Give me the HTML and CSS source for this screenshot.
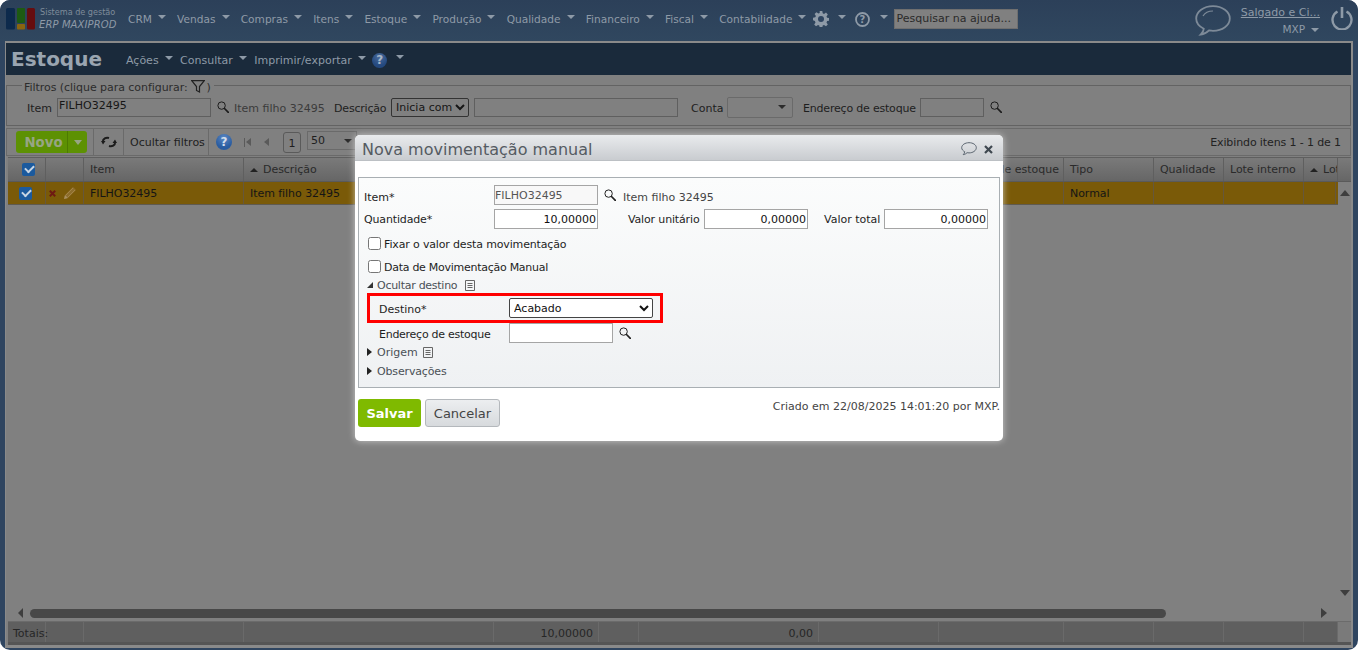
FILE: index.html
```html
<!DOCTYPE html>
<html lang="pt-BR">
<head>
<meta charset="utf-8">
<title>Estoque - ERP MAXIPROD</title>
<link rel="stylesheet" href="styles.css">
</head>
<body>
<svg class="defs" width="0" height="0" aria-hidden="true">
  <symbol id="mag" viewBox="0 0 12 12"><circle cx="4.600" cy="4.600" r="3.700" fill="none" stroke="currentColor" stroke-width="1"/><path d="M7.500 7.500l3.800 3.800" stroke="currentColor" stroke-width="1.700" stroke-linecap="round"/></symbol>
  <symbol id="doc" viewBox="0 0 10 11"><path d="M.5.5h9v10h-9zM2.500 3.500h5M2.500 5.500h5M2.500 7.500h5" fill="none" stroke="currentColor"/></symbol>
</svg>
<div class="app">
  <header class="topbar">
    <div class="logo">
      <svg width="30" height="22" viewBox="0 0 30 22"><rect x="0" y="0" width="9" height="21.500" rx="1.500" fill="#0d2a4c"/><rect x="11" y="0" width="8" height="15" rx="1" fill="#1d5a12"/><rect x="11" y="16" width="8" height="5.500" rx="1" fill="#8a6510"/><rect x="21" y="0" width="8" height="21.500" rx="1.500" fill="#660d0f"/></svg>
      <div class="logo-text"><span class="logo-a">Sistema de gestão</span><span class="logo-b">ERP MAXIPROD</span></div>
    </div>
    <nav class="mainnav">
      <a class="nav-item">CRM<i class="caret"></i></a>
      <a class="nav-item">Vendas<i class="caret"></i></a>
      <a class="nav-item">Compras<i class="caret"></i></a>
      <a class="nav-item">Itens<i class="caret"></i></a>
      <a class="nav-item">Estoque<i class="caret"></i></a>
      <a class="nav-item">Produção<i class="caret"></i></a>
      <a class="nav-item">Qualidade<i class="caret"></i></a>
      <a class="nav-item">Financeiro<i class="caret"></i></a>
      <a class="nav-item">Fiscal<i class="caret"></i></a>
      <a class="nav-item nav-last">Contabilidade<i class="caret"></i></a>
      <svg class="gear" width="16" height="16" viewBox="0 0 16 16"><path d="M6.700 0h2.600l.4 2.300 1.300.6 2-1.300 1.800 1.800-1.300 2 .6 1.300 2.300.4v2.600l-2.300.4-.6 1.300 1.300 2-1.800 1.800-2-1.300-1.300.6-.4 2.300H6.700l-.4-2.300-1.300-.6-2 1.300-1.800-1.800 1.300-2-.6-1.300L0 9.300V6.700l2.300-.4.6-1.300-1.300-2 1.800-1.800 2 1.300 1.300-.6z" fill="#8e9aa7"/><circle cx="8" cy="8" r="3" fill="#2f4560"/></svg>
      <i class="caret caret-gear"></i>
      <svg class="qmark" width="15" height="15" viewBox="0 0 15 15"><circle cx="7.500" cy="7.500" r="6.500" fill="none" stroke="#8e9aa7" stroke-width="1.800"/><text x="7.500" y="11" text-anchor="middle" class="qmark-t">?</text></svg>
      <i class="caret caret-q"></i>
      <input class="help-search" placeholder="Pesquisar na ajuda...">
    </nav>
    <svg class="bubble" width="36" height="31" viewBox="0 0 36 31"><path d="M18 1.200C8.600 1.200 1.200 6.800 1.200 13.500c0 4.400 3 8 7.600 10.200-.2 2.200-1.500 4.400-3 5.800 3.300-.3 6.400-2.200 8.200-4.100 1.300.2 2.600.4 4 .4 9.400 0 16.800-5.600 16.800-12.300S27.400 1.200 18 1.200z" fill="none" stroke="#7d8a98" stroke-width="1.800"/><path d="M8 11c2-3.500 6-5 10-5" fill="none" stroke="#7d8a98" stroke-width="1.200"/></svg>
    <div class="user">
      <a class="user-name">Salgado e Ci...</a>
      <span class="user-code">MXP<i class="caret caret-user"></i></span>
    </div>
    <svg class="power" width="22" height="23" viewBox="0 0 22 23"><path d="M6.500 4.500a9.500 9.500 0 1 0 9 0" fill="none" stroke="#8e9aa7" stroke-width="2.400"/><path d="M11 0v11" stroke="#8e9aa7" stroke-width="2.600"/></svg>
  </header>

  <main class="panel">
    <div class="titlebar">
      <h1 class="page-title">Estoque</h1>
      <a class="title-item">Ações<i class="caret"></i></a>
      <a class="title-item">Consultar<i class="caret"></i></a>
      <a class="title-item">Imprimir/exportar<i class="caret"></i></a>
      <span class="help-btn help-dim">?</span>
      <i class="caret caret-title"></i>
    </div>

    <fieldset class="filters">
      <legend class="filters-legend">Filtros (clique para configurar:
        <svg class="funnel" width="14" height="13" viewBox="0 0 14 13"><path d="M.7.7h12.600L8.500 6.500v5.500l-3-1.500V6.500z" fill="none" stroke="#222" stroke-width="1.200"/></svg> )</legend>
      <div class="filter-row">
        <label class="f-item">Item</label>
        <input class="fld fld-item" value="FILHO32495">
        <svg class="mag" width="12" height="12"><use href="#mag"/></svg>
        <span class="muted f-name">Item filho 32495</span>
        <label class="f-desc">Descrição</label>
        <select class="sel sel-desc"><option>Inicia com</option></select>
        <input class="fld fld-desc">
        <label class="f-conta">Conta</label>
        <span class="combo"><i class="caret caret-dark"></i></span>
        <label class="f-end">Endereço de estoque</label>
        <input class="fld fld-end">
        <svg class="mag" width="12" height="12"><use href="#mag"/></svg>
      </div>
    </fieldset>

    <div class="toolbar">
      <div class="btn-novo"><span class="novo-l">Novo</span><span class="novo-r"><i class="caret caret-novo"></i></span></div>
      <span class="tool tool-refresh">
        <svg width="16" height="14" viewBox="0 0 16 14"><path d="M1.800 7C1.800 3.500 5 2 8 3M14.200 7c0 3.500-3.200 5-6.200 4" fill="none" stroke="#1c1c1c" stroke-width="2"/><path d="M0 6l2 3.500L4.500 6zM16 8l-2-3.500L11.500 8z" fill="#1c1c1c"/></svg>
      </span>
      <span class="tool tool-text">Ocultar filtros</span>
      <span class="help-btn tool-help">?</span>
      <span class="pg-first"><i class="pg-bar"></i><i class="tri-left"></i></span>
      <i class="tri-left pg-prev"></i>
      <span class="pg-num">1</span>
      <span class="pg-size">50<i class="caret caret-dark"></i></span>
      <span class="pg-info">Exibindo itens 1 - 1 de 1</span>
    </div>

    <div class="grid-head cols">
      <div class="cell"><span class="chk"></span></div>
      <div class="cell"></div>
      <div class="cell cell-t">Item</div>
      <div class="cell cell-t"><i class="tri-up"></i>Descrição</div>
      <div class="cell"></div><div class="cell"></div><div class="cell"></div><div class="cell"></div>
      <div class="cell cell-r">Endereço de estoque</div>
      <div class="cell cell-t">Tipo</div>
      <div class="cell cell-t">Qualidade</div>
      <div class="cell cell-t">Lote interno</div>
      <div class="cell cell-t cell-clip"><i class="tri-up"></i>Lote</div>
      <div class="cell cell-end"></div>
    </div>

    <div class="grid-body">
      <div class="grid-main">
        <div class="grid-row cols">
          <div class="cell"><span class="chk chk-row"></span></div>
          <div class="cell cell-act">
            <svg width="7" height="7" viewBox="0 0 7 7"><path d="M.8.8l5.400 5.400M6.200.8L.8 6.200" stroke="#6e1a12" stroke-width="2"/></svg>
            <svg width="14" height="14" viewBox="0 0 14 14"><path d="M1 13l1-4 8-8 3 3-8 8z" fill="#8d6d2c"/><path d="M3 9l7-7M5 11l7-7" stroke="#a88a4c" stroke-width=".8"/><path d="M1 13l1-4 3 3z" fill="#a98f5f"/></svg>
          </div>
          <div class="cell cell-t">FILHO32495</div>
          <div class="cell cell-t">Item filho 32495</div>
          <div class="cell"></div><div class="cell"></div><div class="cell"></div><div class="cell"></div><div class="cell"></div>
          <div class="cell cell-t">Normal</div>
          <div class="cell"></div><div class="cell"></div><div class="cell"></div>
        </div>
      </div>
      <div class="vscroll"><i class="tri-up tri-big"></i><i class="tri-down tri-big"></i></div>
    </div>

    <div class="hscroll">
      <i class="tri-left hs-left"></i>
      <div class="hs-track"><div class="hs-thumb"></div></div>
      <i class="tri-right hs-right"></i>
    </div>

    <div class="totals cols">
      <div class="cell cell-total">Totais:</div>
      <div class="cell"></div><div class="cell"></div><div class="cell"></div>
      <div class="cell cell-num">10,00000</div>
      <div class="cell"></div>
      <div class="cell cell-num">0,00</div>
      <div class="cell"></div><div class="cell"></div><div class="cell"></div><div class="cell"></div><div class="cell"></div><div class="cell"></div>
      <div class="cell cell-corner"></div>
    </div>
  </main>

  <section class="dialog">
    <div class="dlg-title">
      <h2 class="dlg-h">Nova movimentação manual</h2>
      <svg width="16" height="14" viewBox="0 0 16 14"><path d="M8 .7C4 .7.7 2.900.7 5.700c0 1.700 1.200 3.100 3 4-.1 1.200-.8 2.300-1.500 3 1.600-.2 3-1.100 3.900-2 .6.100 1.200.2 1.900.2 4 0 7.300-2.300 7.300-5.200S12 .7 8 .7z" fill="none" stroke="#5c6670"/></svg>
      <svg class="dlg-x" width="9" height="9" viewBox="0 0 9 9"><path d="M1 1l7 7M8 1L1 8" stroke="#3f4850" stroke-width="2.200"/></svg>
    </div>
    <div class="dlg-form">
      <div class="row row-item">
        <label class="lbl lbl-low3">Item*</label>
        <input class="fld2 fld-w ro" value="FILHO32495">
        <svg class="mag2" width="12" height="12"><use href="#mag"/></svg>
        <span class="item-name">Item filho 32495</span>
      </div>
      <div class="row row-qty">
        <label class="lbl lbl-low1 tight">Quantidade*</label>
        <input class="fld2 fld-w num" value="10,00000">
        <label class="lbl-u lbl-low1 tight">Valor unitário</label>
        <input class="fld2 fld-w num" value="0,00000">
        <label class="lbl-t lbl-low1">Valor total</label>
        <input class="fld2 fld-w num" value="0,00000">
      </div>
      <label class="row row-chk row-chk1"><input class="cb" type="checkbox"><span class="chk-text tight">Fixar o valor desta movimentação</span></label>
      <label class="row row-chk row-chk2"><input class="cb" type="checkbox"><span class="chk-text2 tighter">Data de Movimentação Manual</span></label>
      <div class="row row-sec row-sec1"><i class="tri-corner"></i><span class="sec tighter">Ocultar destino</span><svg class="doc" width="10" height="11"><use href="#doc"/></svg></div>
      <div class="dest">
        <label class="lbl-d lbl-dest">Destino*</label>
        <select class="sel sel-dest"><option>Acabado</option></select>
      </div>
      <div class="row row-end">
        <label class="lbl-d lbl-e lbl-low3 tighter">Endereço de estoque</label>
        <input class="fld2 fld-w">
        <svg class="mag2" width="12" height="12"><use href="#mag"/></svg>
      </div>
      <div class="row row-sec row-sec2"><i class="tri-right tri-black"></i><span class="sec">Origem</span><svg class="doc doc-near" width="10" height="11"><use href="#doc"/></svg></div>
      <div class="row row-sec row-sec3"><i class="tri-right tri-black"></i><span class="sec tight">Observações</span></div>
    </div>
    <div class="dlg-foot">
      <button class="btn-save">Salvar</button>
      <button class="btn-cancel">Cancelar</button>
      <span class="created">Criado em 22/08/2025 14:01:20 por MXP.</span>
    </div>
  </section>
</div>
</body>
</html>
```
FILE: styles.css
```css
* { box-sizing: border-box; }
html, body { margin: 0; height: 650px; overflow: hidden; background: #fff; }
body { font: 11px/1.2 "DejaVu Sans", sans-serif; color: #1e1e1e; }
i { display: block; font-style: normal; }
label, a { display: block; }
.defs { position: absolute; }
.tight { letter-spacing: -.15px; }
.tighter { letter-spacing: -.27px; }
.qmark-t { font: bold 10px "DejaVu Sans", sans-serif; fill: #8e9aa7; }

.app { position: relative; width: 1358px; height: 650px; background: #2f4560; border-radius: 10px; overflow: hidden; display: flex; flex-direction: column; }

.caret { width: 0; height: 0; border-left: 4px solid transparent; border-right: 4px solid transparent; border-top: 4px solid #8e9aa7; margin-left: 6px; }

.help-btn { width: 16px; height: 16px; flex: none; border-radius: 50%; background: radial-gradient(circle at 50% 25%, #5b88c4, #2a5ca0 65%); color: #d5deea; font: bold 12px/16px "DejaVu Sans", sans-serif; text-align: center; }
.help-dim { margin: 2px 0 0 -1px; width: 15px; height: 15px; line-height: 15px; background: radial-gradient(circle at 50% 25%, #4a6c9c, #24497f 65%); color: #a9b6c6; }

.topbar { height: 41px; flex: none; display: flex; align-items: flex-start; background: linear-gradient(#2c4059, #30475f); color: #8e9aa7; }
.logo { width: 128px; padding: 8px 0 0 6px; display: flex; gap: 3px; flex: none; }
.logo-text { display: flex; flex-direction: column; margin-top: -1px; }
.logo-a { font-size: 8.100px; line-height: 11px; color: #7f8c9a; padding-left: 1px; }
.logo-b { font-size: 10px; line-height: 13px; font-style: italic; color: #8e9aa7; letter-spacing: .1px; }
.mainnav { display: flex; align-items: center; height: 29px; margin-top: 4px; width: 890px; flex: none; }
.nav-item { display: flex; align-items: center; font-size: 10.600px; margin-right: 11.200px; padding-top: 2px; white-space: nowrap; }
.nav-item .caret { margin-top: -4px; }
.nav-last { margin-right: 7px; }
.gear { flex: none; margin-top: 1px; }
.caret-gear { margin-left: 9px; margin-top: -4px; }
.qmark { margin-left: 9px; flex: none; margin-top: 1px; }
.caret-q { margin-left: 10px; margin-top: -4px; }
.help-search { width: 124px; height: 20px; margin-left: 6px; padding: 0 1px; border: 1px solid #6f6f6f; background: #808080; font: 11px "DejaVu Sans", sans-serif; color: #222; }
.help-search::placeholder { color: #2a2a2a; opacity: 1; }
.bubble { margin: 5px 0 0 177px; flex: none; }
.user { width: 78px; margin: 6px 0 0 11px; flex: none; display: flex; flex-direction: column; align-items: flex-end; }
.user-name { font-size: 11px; text-decoration: underline; color: #8e9aa7; white-space: nowrap; line-height: 14px; }
.user-code { display: flex; align-items: center; margin-top: 3px; font-size: 10.500px; line-height: 13px; color: #8e9aa7; padding-right: 1px; }
.caret-user { margin-left: 6px; }
.power { margin: 7px 0 0 11px; flex: none; }

.panel { flex: none; width: 1348px; height: 607px; margin-left: 5px; background: #808080; border: 2px solid #8a8a8a; border-bottom-width: 3px; border-left-width: 1px; border-right-width: 2px; display: flex; flex-direction: column; }
.titlebar { height: 32px; flex: none; background: #1a2a3b; display: flex; align-items: center; padding-left: 5px; color: #8e9aa7; }
.page-title { margin: 0 24px 0 0; font-size: 20px; font-weight: bold; color: #9aa5b0; line-height: 32px; }
.title-item { display: flex; align-items: center; margin-right: 7.500px; white-space: nowrap; padding-top: 3px; }
.title-item .caret { margin-top: -5px; }
.caret-title { margin-left: 9px; margin-top: -4px; }

.filters { flex: none; margin: 3px 0 0 0; padding: 0 0 0 20px; height: 48px; border: 1px solid #636363; min-width: 0; }
.filters-legend { position: relative; top: 2px; padding: 0 3px 0 2px; margin-left: -5px; color: #2c2c2c; line-height: 14px; height: 14px; white-space: nowrap; letter-spacing: -.05px; }
.funnel { vertical-align: -2px; margin-right: -2px; }
.filter-row { display: flex; align-items: center; height: 20px; white-space: nowrap; margin-top: 5px; }
.filter-row label, .f-name { padding-top: 3px; }
.fld { height: 19px; border: 1px solid #5f5f5f; background: #808080; padding: 0 2px 3px 1px; font: 11px "DejaVu Sans", sans-serif; color: #161616; }
.f-item { margin-right: 5px; }
.fld-item { width: 154px; }
.mag { color: #1c1c1c; margin-left: 6px; flex: none; }
.muted { color: #3b3b3b; }
.f-name { margin-left: 5px; width: 91px; }
.f-desc { margin-left: 9px; width: 52px; letter-spacing: -.2px; }
.sel { appearance: auto; font: 11px "DejaVu Sans", sans-serif; }
.sel-desc { width: 78px; height: 19px; margin-left: 5px; background: #808080; border: 1px solid #333; border-radius: 2px; color: #161616; padding: 0; }
.fld-desc { width: 204px; margin-left: 5px; }
.f-conta { margin-left: 13px; width: 31px; }
.combo { width: 66px; height: 21px; margin-left: 5px; border: 1px solid #6a6a6a; border-radius: 2px; display: flex; align-items: center; justify-content: flex-end; padding-right: 6px; }
.caret-dark { border-top-color: #2b2b2b; margin-left: 0; }
.f-end { margin-left: 10px; width: 112px; letter-spacing: -.2px; }
.fld-end { width: 64px; margin-left: 5px; }

.toolbar { flex: none; height: 28px; margin-top: 2px; border: 1px solid #6a6a6a; display: flex; align-items: center; padding-left: 9px; position: relative; }
.btn-novo { width: 71px; height: 22px; background: #5d9103; border-radius: 3px; display: flex; flex: none; }
.novo-l { width: 51px; padding-left: 4px; text-align: center; font: bold 13.300px/23px "DejaVu Sans", sans-serif; color: #97a584; }
.novo-r { width: 20px; border-left: 1px solid #4d7a02; display: flex; align-items: center; justify-content: center; }
.caret-novo { border-top-color: #97a584; border-top-width: 5px; margin: 0; }
.tool { height: 26px; display: flex; align-items: center; border-left: 1px solid #6a6a6a; flex: none; }
.tool-refresh { margin-left: 6px; padding: 0 0 0 7px; width: 30px; }
.tool-text { padding: 2px 0 0 6px; width: 86px; border-right: 1px solid #6a6a6a; }
.tool-help { margin-left: 7px; }
.pg-first { display: flex; align-items: center; margin-left: 12px; gap: 1px; }
.pg-bar { width: 1px; height: 9px; background: #5a5a5a; }
.tri-left { width: 0; height: 0; border-top: 4px solid transparent; border-bottom: 4px solid transparent; border-right: 5px solid #5a5a5a; }
.tri-right { width: 0; height: 0; border-top: 5px solid transparent; border-bottom: 5px solid transparent; border-left: 6px solid #3e3e3e; }
.tri-up { width: 0; height: 0; border-left: 4px solid transparent; border-right: 4px solid transparent; border-bottom: 4px solid #222; }
.tri-down { width: 0; height: 0; border-left: 4px solid transparent; border-right: 4px solid transparent; border-top: 4px solid #3e3e3e; }
.pg-prev { margin-left: 13px; }
.pg-num { width: 18px; height: 21px; margin-left: 14px; border: 1px solid #5a5a5a; border-radius: 3px; text-align: center; line-height: 21px; }
.pg-size { width: 50px; height: 19px; margin: -3px 0 0 6px; border: 1px solid #6a6a6a; display: flex; align-items: center; justify-content: space-between; padding: 0 4px 0 3px; }
.pg-info { margin-left: auto; margin-right: 9px; color: #222; letter-spacing: -.12px; padding-top: 2px; }

.cols { display: grid; grid-template-columns: 38px 38px 160px 250px 105px 40px 180px 120px 125px 90px 70px 80px 34px 13px; }
.grid-head { flex: none; height: 25px; margin: 1px 0 0 2px; background: linear-gradient(#7a7a7a, #666); border-bottom: 1px solid #5a5a5a; border-top: 1px solid #5f5f5f; }
.cell { border-right: 1px solid #5f5f5f; display: flex; align-items: center; min-width: 0; overflow: hidden; white-space: nowrap; }
.cell-t { padding-left: 6px; gap: 5px; color: #2a2a2a; letter-spacing: -.05px; }
.cell-r { justify-content: flex-end; padding-right: 4px; color: #2a2a2a; }
.cell-clip { overflow: hidden; }
.cell-end { border-right: 0; }
.chk { width: 13px; height: 13px; margin-left: 14px; background: #1b5a9e; border-radius: 2px; position: relative; }
.chk-row { margin-left: 11px; }
.chk::after { content: ""; position: absolute; left: 3px; top: 2px; width: 7px; height: 4px; border-left: 2px solid #c9d6e4; border-bottom: 2px solid #c9d6e4; transform: rotate(-45deg); }

.grid-body { flex: 1; display: flex; margin-left: 2px; min-height: 0; }
.grid-main { width: 1330px; }
.grid-row { height: 23px; background: #7a5a08; border-bottom: 1px solid #5f5a50; grid-template-columns: 38px 38px 160px 250px 105px 40px 180px 120px 125px 90px 70px 80px 32px; }
.grid-row .cell { border-right-color: #66573a; }
.grid-row .cell-t { color: #151515; padding-top: 1px; }
.cell-act { padding-left: 3px; gap: 7px; }
.vscroll { width: 13px; padding: 8px 0 9px 2px; display: flex; flex-direction: column; justify-content: space-between; }
.tri-big { border-left-width: 5px; border-right-width: 5px; border-bottom-width: 6px; border-top-width: 6px; }
.tri-big.tri-up { border-top-width: 0; border-bottom-color: #3e3e3e; }
.tri-big.tri-down { border-bottom-width: 0; }

.hscroll { flex: none; height: 16px; display: flex; align-items: center; padding-left: 12px; }
.hs-left { border-top-width: 5px; border-bottom-width: 5px; border-right-color: #3e3e3e; }
.hs-track { width: 1136px; margin-left: 7px; height: 9px; }
.hs-thumb { height: 9px; background: #484848; border-radius: 5px; }
.hs-right { margin-left: 155px; }

.totals { flex: none; height: 24px; margin: 0 0 0 2px; background: #5f5f5f; border-top: 1px solid #6b6b6b; border-bottom: 3px solid #555; color: #262626; }
.totals .cell { border-right-color: #6a6a6a; padding-top: 3px; }
.cell-total { padding-left: 5px; overflow: visible; }
.cell-num { justify-content: flex-end; padding-right: 5px; }
.cell-corner { background: #7a7a7a; border-right: 0; }

.dialog { position: absolute; left: 355px; top: 135px; width: 648px; height: 306px; background: #fff; border-radius: 5px; box-shadow: 0 0 7px rgba(225,225,225,.75); display: flex; flex-direction: column; overflow: hidden; }
.dlg-title { flex: none; height: 26px; background: linear-gradient(#e9ebed, #c9ccd0); display: flex; align-items: center; padding: 3px 10px 0 7px; border-bottom: 1px solid #bcc0c4; color: #4e555c; }
.dlg-h { margin: 0 auto 0 0; font-size: 16px; font-weight: normal; color: #555b62; line-height: 24px; padding-top: 2px; }
.dlg-x { margin-left: 7px; }
.dlg-form { flex: none; height: 211px; margin: 16px 3px 0 3px; padding: 7px 0 0 5px; border: 1px solid #a9afb3; background: linear-gradient(#fbfcfc, #eff1f3); }
.row { display: flex; align-items: center; white-space: nowrap; }
.row-item { height: 20px; }
.row-qty { height: 20px; margin-top: 4px; }
.lbl { width: 130px; }
.lbl-low1 { padding-top: 2px; }
.lbl-low3 { padding-top: 5px; }
.fld2 { height: 20px; border: 1px solid #a5a5a5; background: #fff; padding: 0 1px 0 0; font: 11px "DejaVu Sans", sans-serif; color: #111; }
.fld-w { width: 104px; }
.ro { background: #f8f8f8; color: #555; }
.num { text-align: right; }
.mag2 { margin-left: 6px; color: #222; flex: none; }
.item-name { margin-left: 7px; color: #444; padding-top: 5px; }
.lbl-u { margin-left: 30px; width: 76px; }
.lbl-t { margin-left: 16px; width: 60px; }
.row-chk { height: 20px; padding-left: 4px; }
.row-chk1 { margin-top: 4px; }
.row-chk2 { margin-top: 3px; }
.cb { width: 13px; height: 13px; margin: 0 3px 0 0; }
.chk-text { padding-top: 4px; }
.chk-text2 { padding-top: 3px; }
.row-sec { color: #4a5056; padding-left: 3px; }
.sec { padding-top: 1px; }
.row-sec1 { height: 16px; margin-top: 1px; }
.row-sec2 { height: 18px; margin-top: 1px; }
.row-sec3 { height: 18px; margin-top: 1px; }
.tri-corner { width: 0; height: 0; border-style: solid; border-width: 0 0 6px 6px; border-color: transparent transparent #333 transparent; margin-right: 4px; }
.tri-black { border-top-width: 4px; border-bottom-width: 4px; border-left-width: 5px; border-left-color: #222; margin-right: 5px; }
.doc { margin-left: 8px; color: #666; flex: none; }
.doc-near { margin-left: 5px; }
.dest { height: 30px; width: 296px; margin-left: 3px; border: 3px solid #f00; display: flex; align-items: center; padding-left: 9px; }
.lbl-d { width: 130px; flex: none; }
.lbl-dest { padding-top: 4px; }
.lbl-e { margin-left: 15px; }
.sel-dest { width: 144px; height: 20px; background: #fff; border: 1px solid #444; border-radius: 2px; color: #111; padding: 1px 0 0 0; }
.row-end { height: 19px; }
.dlg-foot { flex: none; display: flex; align-items: flex-start; margin: 11px 3px 0 3px; }
.btn-save { width: 63px; height: 28px; border: 0; border-radius: 3px; background: #7fba00; color: #fff; font: bold 13px "DejaVu Sans", sans-serif; padding: 0; }
.btn-cancel { width: 75px; height: 28px; margin-left: 4px; border: 1px solid #b4b8bc; border-radius: 3px; background: linear-gradient(#eceef0, #d7dadd); color: #444; font: 13px "DejaVu Sans", sans-serif; padding: 0; }
.created { margin: 1px 0 0 auto; color: #444; line-height: 14px; }
```
